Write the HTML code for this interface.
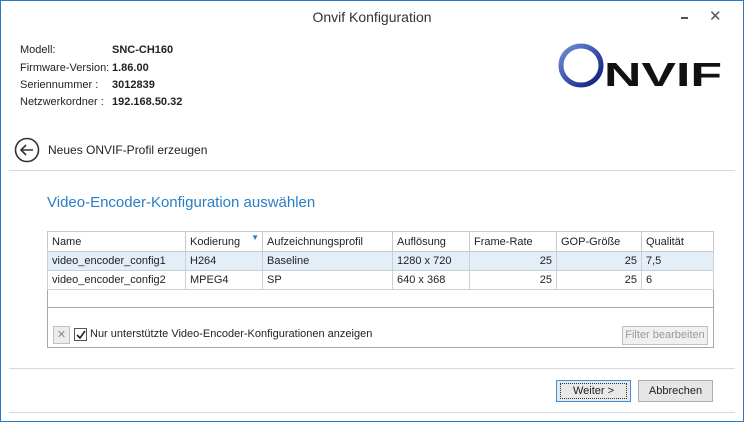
<!DOCTYPE html>
<html><head><meta charset="utf-8"><style>
*{margin:0;padding:0;box-sizing:border-box}
body{width:744px;height:422px;background:#fff;font-family:"Liberation Sans",sans-serif;font-size:11px;color:#222;position:relative;overflow:hidden}
.win{position:absolute;left:0;top:0;width:744px;height:422px;border:1px solid #2b79c2}
.a{position:absolute;white-space:nowrap}
.b{font-weight:bold}
.hl{position:absolute;height:1px;background:#d8d8d8}
table{position:absolute;left:47px;top:231px;border-collapse:collapse;table-layout:fixed}
td{height:19px;border:1px solid #d0d0d0;padding:0 4px;white-space:nowrap;font-size:11px}
tr.h td{height:20px;border-color:#c8c8c8}
tr.s td{background:#e3eef9}
.r{text-align:right}
.btn{position:absolute;height:22px;border:1px solid #adadad;background:#e6e6e6;text-align:center;line-height:20px;font-size:11px}
</style></head><body>
<div class="win"></div>
<div class="a" style="left:0;width:744px;top:9px;text-align:center;font-size:14px;color:#333">Onvif Konfiguration</div>
<div class="a" style="left:681px;top:17px;width:7px;height:1.5px;background:#555"></div>
<div class="a" style="left:709px;top:7px;font-size:15px;color:#555">✕</div>

<div class="a" style="left:20px;top:44px">Modell:</div><div class="a b" style="left:112px;top:44px">SNC-CH160</div>
<div class="a" style="left:20px;top:62px">Firmware-Version:</div><div class="a b" style="left:112px;top:62px">1.86.00</div>
<div class="a" style="left:20px;top:79px">Seriennummer :</div><div class="a b" style="left:112px;top:79px">3012839</div>
<div class="a" style="left:20px;top:96px">Netzwerkordner :</div><div class="a b" style="left:112px;top:96px">192.168.50.32</div>

<svg class="a" style="left:555px;top:40px" width="175" height="52">
<defs><linearGradient id="g" x1="0" y1="0" x2="1" y2="1"><stop offset="0" stop-color="#6d8fd8"/><stop offset="1" stop-color="#0d1a7a"/></linearGradient></defs>
<ellipse cx="26" cy="25.5" rx="20" ry="19.5" fill="none" stroke="url(#g)" stroke-width="5"/>
<text x="49" y="46" font-family="Liberation Sans" font-weight="bold" font-size="33" textLength="118" lengthAdjust="spacingAndGlyphs" fill="#111">NVIF</text>
</svg>

<svg class="a" style="left:14px;top:137px" width="26" height="26"><circle cx="13" cy="13" r="11.5" fill="none" stroke="#333" stroke-width="1.6"/><path d="M19 13H7M12 8L7 13L12 18" fill="none" stroke="#333" stroke-width="1.6"/></svg>
<div class="a" style="left:48px;top:143px;font-size:12px">Neues ONVIF-Profil erzeugen</div>
<div class="hl" style="left:9px;top:170px;width:726px"></div>
<div class="a" style="left:47px;top:194px;font-size:15px;color:#2a7ec6">Video-Encoder-Konfiguration auswählen</div>

<div class="a" style="left:47px;top:231px;width:667px;height:117px;border:1px solid #a8a8a8"></div>
<table>
<colgroup><col style="width:138px"><col style="width:77px"><col style="width:130px"><col style="width:77px"><col style="width:87px"><col style="width:85px"><col style="width:72px"></colgroup>
<tr class="h"><td>Name</td><td style="position:relative">Kodierung<span style="position:absolute;right:3px;top:1px;color:#2a7ec6;font-size:8px">▼</span></td><td>Aufzeichnungsprofil</td><td>Auflösung</td><td>Frame-Rate</td><td>GOP-Größe</td><td>Qualität</td></tr>
<tr class="s"><td>video_encoder_config1</td><td>H264</td><td>Baseline</td><td>1280 x 720</td><td class="r">25</td><td class="r">25</td><td>7,5</td></tr>
<tr><td>video_encoder_config2</td><td>MPEG4</td><td>SP</td><td>640 x 368</td><td class="r">25</td><td class="r">25</td><td>6</td></tr>
</table>
<div class="a" style="left:48px;top:307px;width:665px;height:1px;background:#a8a8a8"></div>
<div class="a" style="left:53px;top:326px;width:17px;height:18px;border:1px solid #c0c0c0;background:#ececec;color:#888;text-align:center;line-height:16px;font-size:11px">✕</div>
<div class="a" style="left:74px;top:328px;width:13px;height:13px;border:1px solid #555;background:#fff"></div>
<svg class="a" style="left:75px;top:329px" width="12" height="12"><path d="M2 6L5 9L10 2" fill="none" stroke="#222" stroke-width="1.6"/></svg>
<div class="a" style="left:90px;top:328px">Nur unterstützte Video-Encoder-Konfigurationen anzeigen</div>
<div class="btn" style="left:622px;top:326px;width:86px;height:19px;line-height:17px;color:#999;border-color:#c0c0c0;background:#f0f0f0">Filter bearbeiten</div>

<div class="hl" style="left:9px;top:368px;width:726px"></div>
<div class="btn" style="left:556px;top:380px;width:75px;border-color:#3c8fdc;background:#e8e8e8"><span style="border:1px dotted #333;padding:1px 12px">Weiter &gt;</span></div>
<div class="btn" style="left:638px;top:380px;width:75px">Abbrechen</div>
<div class="hl" style="left:9px;top:412px;width:726px"></div>
</body></html>
